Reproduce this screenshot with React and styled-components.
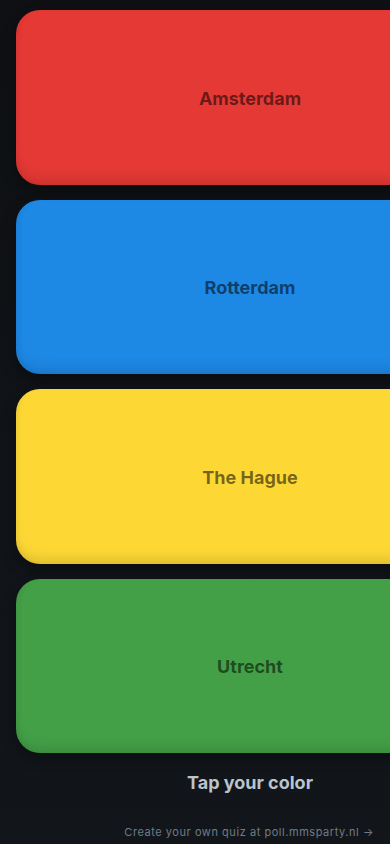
import React from 'react';
import styled, { createGlobalStyle } from 'styled-components';

const GlobalStyle = createGlobalStyle`
  html, body {
    margin: 0;
    padding: 0;
    background: #0f1115;
  }
  body {
    font-family: Inter, "Noto Sans", sans-serif;
    overflow-x: hidden;
  }
`;

const Page = styled.div`
  width: 390px;
  min-height: 844px;
  overflow: hidden;
  background: linear-gradient(180deg, #0e1013 0%, #12161b 100%);
  display: flex;
  flex-direction: column;
`;

const Column = styled.div`
  width: 500px;
  box-sizing: border-box;
  padding: 10px 16px 0;
  display: flex;
  flex-direction: column;
  gap: 15px;
`;

const ColorCard = styled.button`
  height: 174.5px;
  border: none;
  border-radius: 24px;
  background: ${(p) => p.$color};
  box-shadow: inset 0 -10px 14px -6px rgba(0, 0, 0, 0.14),
    inset 4px 0 8px -6px rgba(0, 0, 0, 0.12),
    0 6px 14px rgba(0, 0, 0, 0.35);
  display: flex;
  align-items: center;
  justify-content: center;
  font-family: Inter, Roboto, sans-serif;
  font-size: 18px;
  font-weight: 700;
  color: rgba(0, 0, 0, 0.55);
  cursor: pointer;
  padding: 2px 0 0;
`;

const Hint = styled.div`
  width: 500px;
  margin-top: 17px;
  text-align: center;
  font-size: 18px;
  font-weight: 700;
  line-height: 26px;
  color: #b9c4cc;
`;

const Footer = styled.div`
  width: 390px;
  box-sizing: border-box;
  padding: 0 16px;
  margin-top: 28px;
  text-align: right;
  font-size: 11px;
  line-height: 16px;
  letter-spacing: 0.55px;
  color: #6f7c86;
`;

const options = [
  { name: 'Amsterdam', color: '#e53935' },
  { name: 'Rotterdam', color: '#1e88e5' },
  { name: 'The Hague', color: '#fdd835' },
  { name: 'Utrecht', color: '#43a047' },
];

const App = () => (
  <>
    <GlobalStyle />
    <Page>
      <Column>
        {options.map((o) => (
          <ColorCard key={o.name} $color={o.color}>
            {o.name}
          </ColorCard>
        ))}
      </Column>
      <Hint>Tap your color</Hint>
      <Footer>Create your own quiz at poll.mmsparty.nl →</Footer>
    </Page>
  </>
);

export default App;
